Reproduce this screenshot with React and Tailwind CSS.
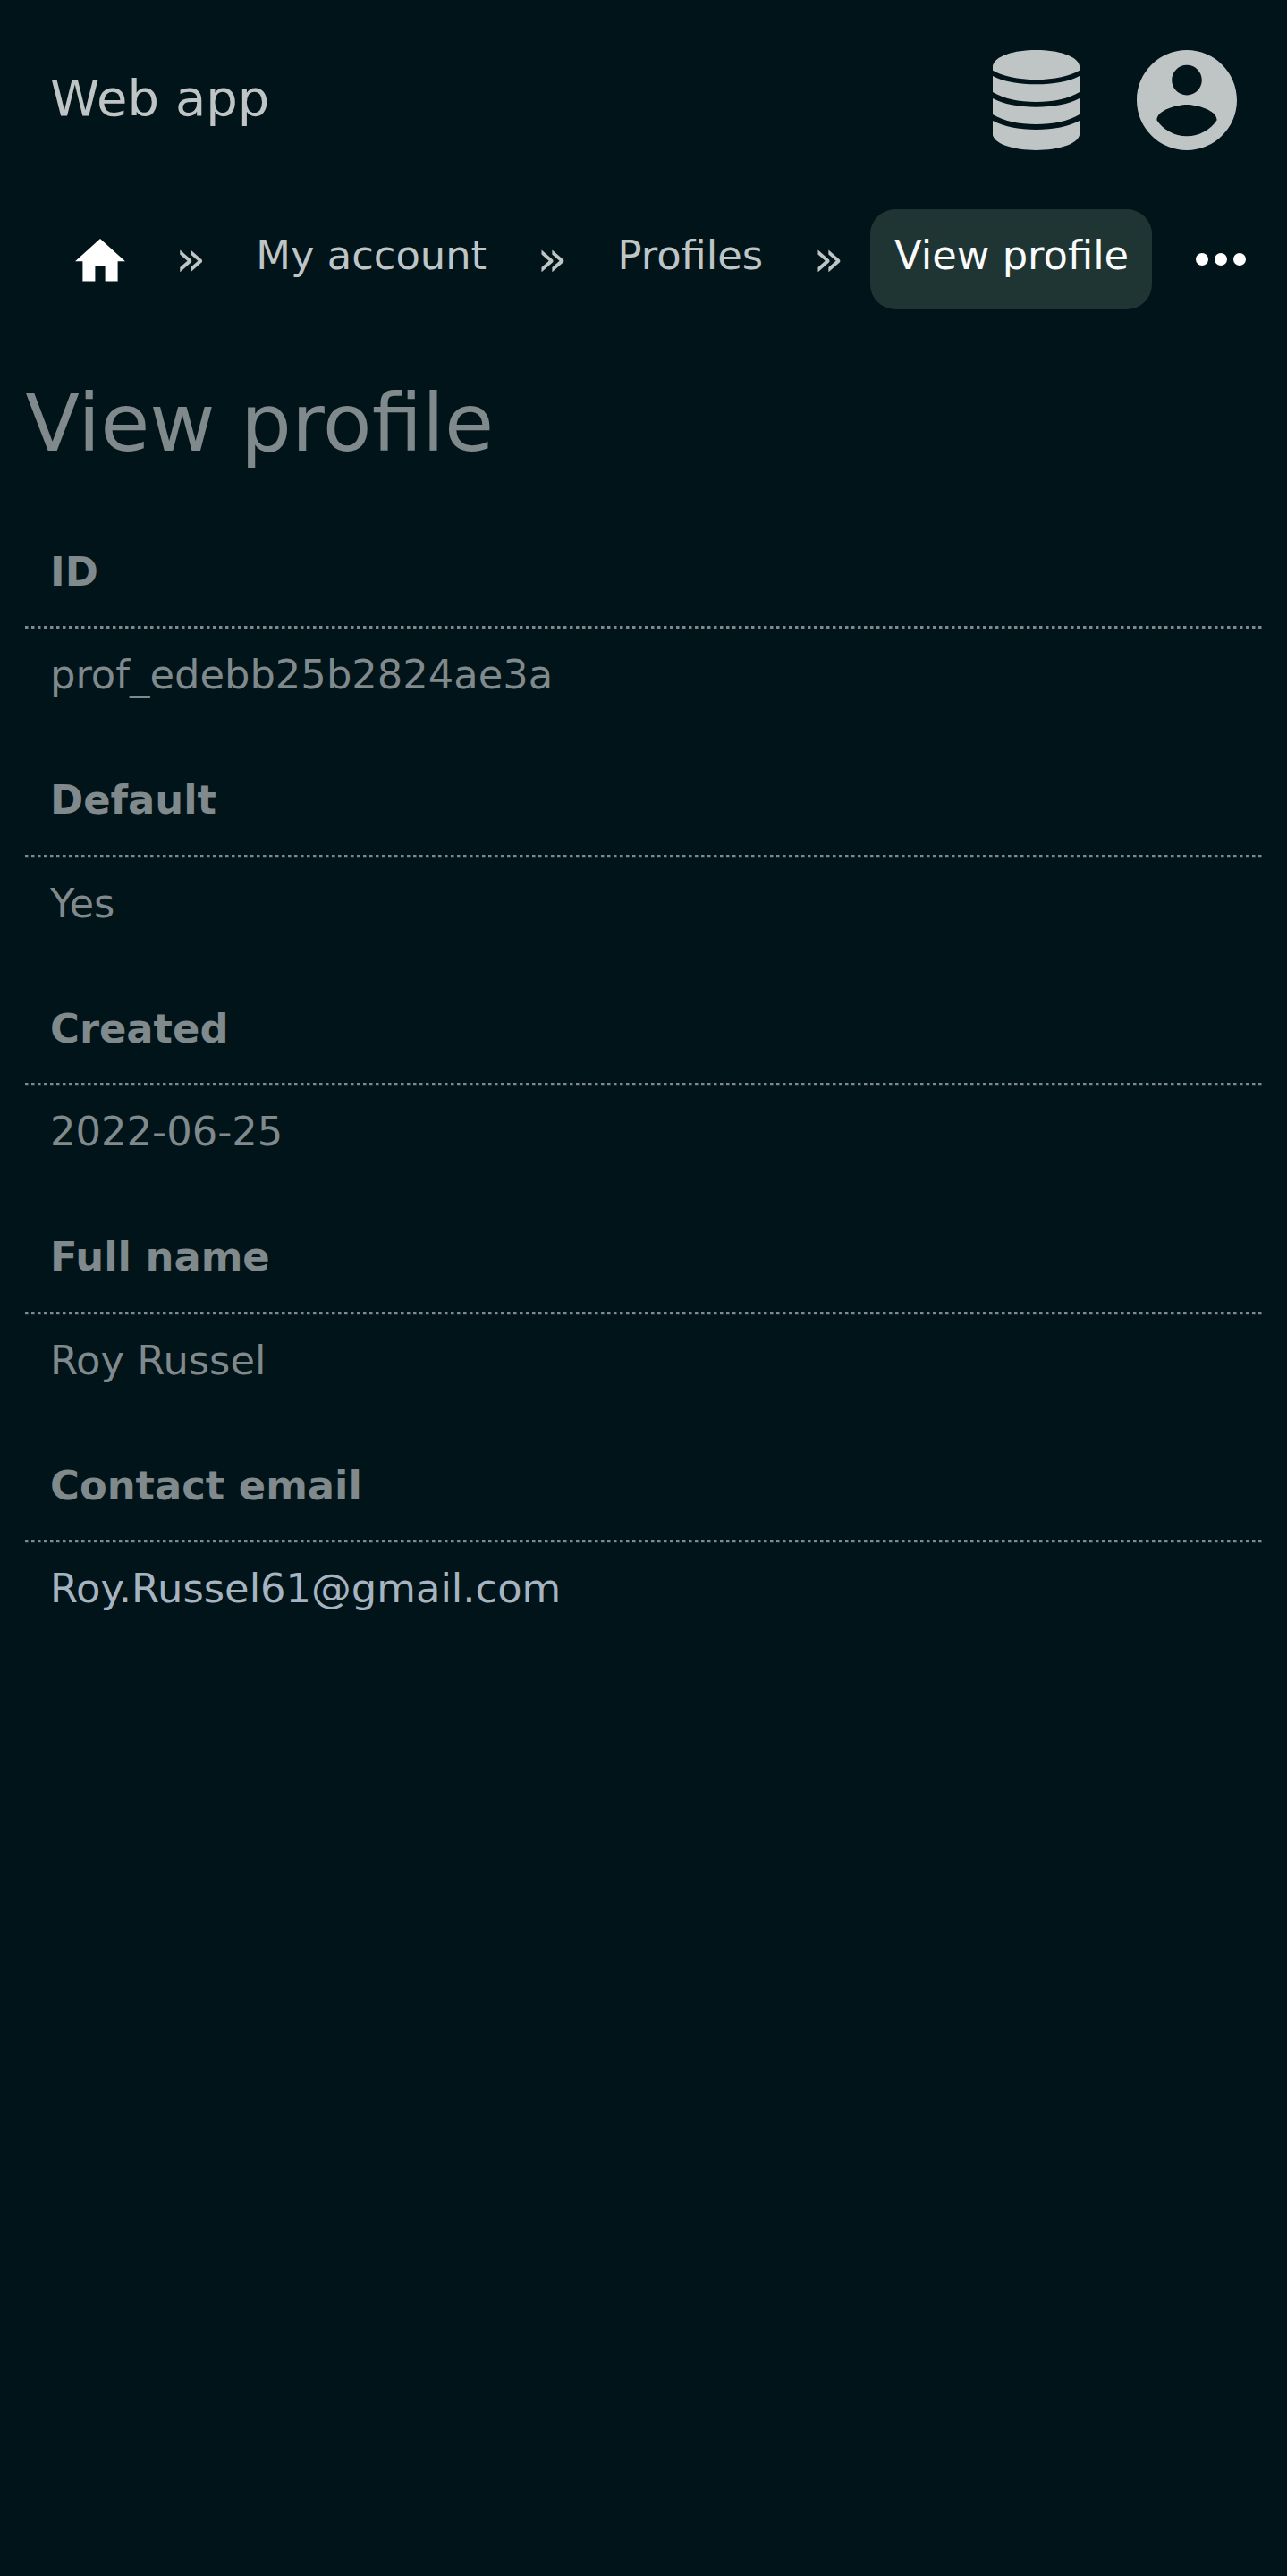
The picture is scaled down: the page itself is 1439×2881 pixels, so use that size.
const FIELDS = [
  ["ID", "prof_edebb25b2824ae3a"],
  ["Default", "Yes"],
  ["Created", "2022-06-25"],
  ["Full name", "Roy Russel"],
  ["Contact email", "Roy.Russel61@gmail.com"],
];

function DatabaseIcon() {
  return (
    <svg viewBox="0 0 291 336" className="h-[112px] w-[97px]" fill="currentColor">
      <path d="M0 52C8 20 70 0 145.500 0S283 20 291 52V68C260 87 205 99 145.500 99S31 87 0 68Z" />
      <path d="M0 87C36 106 88 115 145.500 115S255 106 291 87V141C255 163 203 174 145.500 174S36 163 0 141Z" />
      <path d="M0 162C36 182 88 191 145.500 191S255 182 291 162V216C255 238 203 249 145.500 249S36 238 0 216Z" />
      <path d="M0 237C36 257 88 267 145.500 267S255 257 291 237V286C283 316 221 336 145.500 336S8 316 0 286Z" />
    </svg>
  );
}

function AccountIcon() {
  return (
    <svg viewBox="2 2 20 20" className="size-28" fill="currentColor">
      <path d="M12 2C6.480 2 2 6.480 2 12s4.480 10 10 10 10-4.480 10-10S17.520 2 12 2zm0 3c1.660 0 3 1.340 3 3s-1.340 3-3 3-3-1.340-3-3 1.340-3 3-3zm0 14.200c-2.500 0-4.710-1.280-6-3.220.030-1.990 4-3.080 6-3.080 1.990 0 5.970 1.090 6 3.080-1.290 1.940-3.500 3.220-6 3.220z" />
    </svg>
  );
}

function Separator() {
  return <span className="w-[90.3px] text-center text-[56px] leading-[109px]">»</span>;
}

function DottedRule() {
  return (
    <div className="mt-[32.5px]">
      <div className="h-[3px] bg-[repeating-linear-gradient(90deg,#80898b_0_3px,#404e51_3px_4px,transparent_4px_7px)]" />
      <div className="-mb-px h-px bg-[repeating-linear-gradient(90deg,#1c2d32_0_4px,transparent_4px_7px)]" />
    </div>
  );
}

export default function App() {
  return (
    <div className="min-h-[2881px] w-[1439px] bg-[#001419] font-['DejaVu_Sans',sans-serif] text-[44.8px] text-[#80898b]">
      <header className="flex h-[224px] items-center justify-between px-14 text-[#bfc4c5]">
        <a className="pb-[5px] text-[56px] leading-none">Web app</a>
        <div className="flex gap-16">
          <DatabaseIcon />
          <AccountIcon />
        </div>
      </header>
      <nav className="mt-[10px] flex h-28 pl-14 whitespace-nowrap text-[#bfc4c5]">
        <a className="flex w-28 justify-center pt-[33px] text-white">
          <svg viewBox="2 3 20 17" className="h-[47.6px] w-14" fill="currentColor">
            <path d="M10 20v-6h4v6h5v-8h3L12 3 2 12h3v8z" />
          </svg>
        </a>
        <Separator />
        <a className="px-7 leading-[104px]">My account</a>
        <Separator />
        <a className="px-7 leading-[104px]">Profiles</a>
        <Separator />
        <a className="ml-[1.7px] rounded-[28px] bg-[#1e3534] pr-[26px] pl-[27px] leading-[104px] text-[#fafafa]">View profile</a>
        <button className="ml-[21px] flex w-28 items-center justify-center text-white">
          <svg viewBox="0 0 56 14" className="h-3.5 w-14" fill="currentColor">
            <circle cx="7" cy="7" r="7" />
            <circle cx="28" cy="7" r="7" />
            <circle cx="49" cy="7" r="7" />
          </svg>
        </button>
      </nav>
      <main className="px-7 pt-[75px]">
        <h1 className="text-[89.6px] leading-[104px]">View profile</h1>
        <dl className="mt-[63px]">
          {FIELDS.map(([label, value]) => (
            <div key={label} className="h-[255.5px]">
              <dt className="px-7 pt-[23.8px] leading-[56px] font-bold">{label}</dt>
              <DottedRule />
              <dd className={label === "Contact email" ? "px-7 pt-[23.9px] leading-[56px] text-[#a8b3c0]" : "px-7 pt-[23.9px] leading-[56px]"}>{value}</dd>
            </div>
          ))}
        </dl>
      </main>
    </div>
  );
}
